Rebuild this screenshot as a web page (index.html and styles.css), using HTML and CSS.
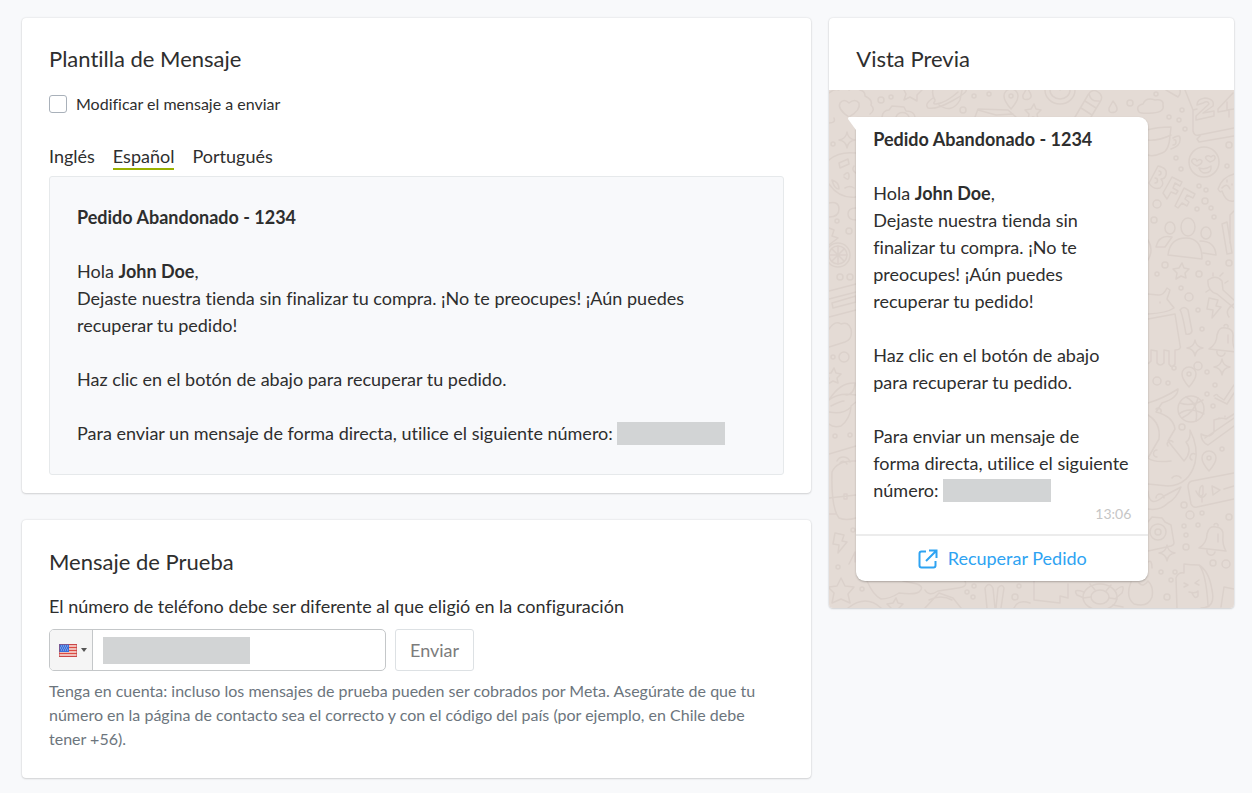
FILE: index.html
```html
<!DOCTYPE html>
<html lang="es">
<head>
  <meta charset="UTF-8">
  <meta name="viewport" content="width=device-width, initial-scale=1.0">
  <title>Plantilla de Mensaje</title>
  <link rel="stylesheet" href="styles.css">
</head>
<body>
  <main class="layout">
    <div class="column">
      <section class="card template">
        <h2>Plantilla de Mensaje</h2>
        <label class="check">
          <input type="checkbox" id="editMessage">
          Modificar el mensaje a enviar
        </label>
        <nav class="tabs">
          <a href="#en">Inglés</a>
          <a href="#es" class="active">Español</a>
          <a href="#pt">Portugués</a>
        </nav>
        <div class="message-box">
          <p><b>Pedido Abandonado - 1234</b></p>
          <p>Hola <b>John Doe</b>,<br>Dejaste nuestra tienda sin finalizar tu compra. ¡No te preocupes! ¡Aún puedes recuperar tu pedido!</p>
          <p>Haz clic en el botón de abajo para recuperar tu pedido.</p>
          <p>Para enviar un mensaje de forma directa, utilice el siguiente número: <span class="redacted"></span></p>
        </div>
      </section>

      <section class="card test">
        <h2>Mensaje de Prueba</h2>
        <label class="phone-label" for="phone">El número de teléfono debe ser diferente al que eligió en la configuración</label>
        <form class="send" autocomplete="off">
          <div class="phone">
            <div class="country">
              <svg class="flag" viewBox="0 0 18 13" width="18" height="13">
                <rect width="18" height="13" fill="#f6e4e2"/>
                <path d="M0 .5h18M0 3.5h18M0 6.5h18M0 9.5h18M0 12.5h18" stroke="#dd4b42" stroke-width="1.4"/>
                <rect width="10" height="8" fill="#3b6fd8"/>
                <path d="M2 2h7M1 4h8M2 6h7" stroke="#a9c6f5" stroke-width="1" stroke-dasharray="1 1"/>
                <rect x=".5" y=".5" width="17" height="12" fill="none" stroke="#b8424e" stroke-opacity=".5"/>
              </svg>
              <svg class="caret" viewBox="0 0 6 4" width="6" height="4"><path d="M0 0h6L3 4z" fill="#555"/></svg>
              <select aria-label="País">
                <option>US</option>
                <option>CL</option>
              </select>
            </div>
            <span class="redacted"></span>
            <input type="tel" id="phone">
          </div>
          <button type="button" class="btn">Enviar</button>
        </form>
        <p class="help">Tenga en cuenta: incluso los mensajes de prueba pueden ser cobrados por Meta. Asegúrate de que tu número en la página de contacto sea el correcto y con el código del país (por ejemplo, en Chile debe tener +56).</p>
      </section>
    </div>

    <aside class="card preview">
      <h2>Vista Previa</h2>
      <div class="chat">
        <svg class="doodles" viewBox="0 0 405 518" preserveAspectRatio="xMinYMin slice" aria-hidden="true">
          <defs>
            <path id="star" d="M0-7l2 5 5 1-4 4 1 5-5-2-5 3 1-6-4-4 6-1z"/>
            <path id="spark" d="M0-8q1 7 8 8q-7 1-8 8q-1-7-8-8q7-1 8-8z"/>
            <path id="pin" d="M0 10q-7-8-7-13a7 7 0 0 1 14 0q0 5-7 13zM-2-3a2 2 0 1 0 4 0a2 2 0 1 0-4 0"/>
            <path id="bolt" d="M-4-9l9 2-2 6 5 1-9 11 1-8-6-1z"/>
            <path id="drop" d="M0-6q7 9 2 11q-7 2-6-4z"/>
            <path id="bell" d="M-13 9q8-5 8-14q2-9 9-7q8 1 7 9q-1 8 3 15zM-5 11a4 4 0 0 0 8 2M2-14a2 2 0 1 1 4 1M6-5v8"/>
          </defs>
          <!-- top strip -->
          <path d="M0 3q6-5 10-3M20 0q5-3 11 0q5 1 5 6q8 4 6 9q5 5-1 9M0 33q7 0 5-5"/>
          <path d="M20 27q-12-8-9-14q4-5 9 0q6-5 10 0q2 7-10 14z"/>
          <path d="M53 27q1-7 7-7l3-4 12 1 2 4q8 0 9 6M67 27a7 7 0 0 1 13 0M74-2l3 6-2 6 6-3 7 4v-6l5-5"/>
          <path d="M104-1a14 14 0 0 0 2 11M110 15q13 9 21-5l2-10M104 8q-9 6-5 10q8 2 24-7t14-11M106 11q-3 3 1 3q10-1 22-12"/>
          <path d="M146 27l3-8 30 1 8 7M149 20l18 5 17-1"/>
          <use href="#pin" x="182" y="9"/><use href="#star" x="205" y="21"/><use href="#drop" x="198" y="4"/>
          <path d="M216 0a15 14 0 0 0 30 0M221 0a10 9 0 0 0 20 0M231 0l3-4"/>
          <path d="M246 27l13-22q4-7 10-3q6 4 2 10l-9 15M256 11l11 7M252 18l11 7M260 4q2 8 10 7"/>
          <use href="#drop" x="284" y="17"/>
          <path d="M310 22q-4-6 4-8q3-7 12-4q9-1 8 5q2 7-10 8t-14-1z"/>
          <path d="M337 0l12 7q3-3 2-7M356 0l8 20M364 20v21q1 5 6 4l35-7M364 20l4-1M371 46l-3 3 2 3 35-6"/>
          <path d="M368 15q0-6 8-7q10 1 8 8l-10 7 11-2v5l-18 4v-4l13-12q-1-4-6-1zM404 3l-15 16v3l11-2v7M398 12v8l7-1"/>
          <!-- right side -->
          <path d="M318 40q10-3 24-3l-1 9q-1 15-8 17-9 4-14 2M318 50q12 1 24-5M344 48q8-5 7 2q0 6-9 9M345 50q2-1 2 2q0 3-3 3"/>
          <circle cx="375" cy="72" r="15"/>
          <path d="M368 76q-8-4-4-7q3-1 4 2q3-3 5 0q0 3-5 5zM381 72q-7-4-3-6q2-1 4 1q3-3 4 0q1 3-5 5zM370 78q7 2 12-2q1 7-6 7-4 0-6-5z"/>
          <path d="M329 76q10 2 8 9q-1 4-5 4q4 5-1 9-7 2-11-5zM330 81a2 2 0 1 1 0 4M326 88a2 2 0 1 1 0 5M334 103l9-16 10 5-2 4-5-3-2 5 5 3-2 3-5-2-4 7zM346 116l9-18 11 6-2 4-6-3-2 4 4 3-2 4-5-3-4 5z"/>
          <path d="M405 84q-12 3-16 15q2 4 4 2q4 12 12 10M393 98q5-6 8 1M398 90v2M403 94v1"/>
          <ellipse cx="359" cy="137" rx="7" ry="9"/><ellipse cx="341" cy="138" rx="5" ry="6"/><ellipse cx="377" cy="143" rx="5" ry="6"/>
          <path d="M339 165q2-17 18-17t16 21zM327 157q3-13 16-10l-7 10zM371 151q15 0 16 14l-13-2"/>
          <path d="M393 134l5-2 5 31-5 1zM405 121l-4 4v28M319 150q6 10 0 20"/>
          <use href="#star" x="353" y="180"/>
          <path d="M319 204l10 1q5 1 9-7l3 2-3 9 7 9q-7 5-26 6M331 212v1M319 229l27-5 5 31q2 5-5 5v14q-3 5-6 0v-13l-5-1 0 13q-4 4-7 0v-12l-6-1v11q-3 4-6 2"/>
          <path d="M351 220q4-5 8 0l4 21q-1 4-6 3-4-22-6-24z"/>
          <path d="M379 190q8-6 14 1l1 9 11 10M379 190q-1 11 9 14l17 14M384 186v-3M391 186l3-3M396 193l3-2M380 200l-3 2M405 214q-10 6-5 13"/>
          <use href="#bolt" x="384" y="217"/><use href="#spark" x="366" y="258"/><use href="#bell" x="393" y="250"/>
          <use href="#spark" x="393" y="277"/><use href="#pin" x="360" y="287"/>
          <path d="M385 306q3-3 4 0l6 4 10-15M386 308l12 6 7-11"/>
          <circle cx="362" cy="319" r="13"/><path d="M351 313q11 4 23-3M357 307q13 7 10 24M369 308q-3 14-16 20M350 324q10-8 25 0"/>
          <path d="M319 313q14-4 30-14q0 9-16 14l-6 9q17 4 19 17l-7 12 16 20q9-10 2-19 5-3 4-12q9 18 5 33-6 22-27 23l-20-2M319 325q13 8 11 24l-11 19q6 5 23 3M327 319a3 3 0 0 1 5 3M339 356a3 3 0 0 1 5-4M328 367a3 3 0 0 1 0-7M343 388a5 4 0 0 1 9 0M363 370a3 3 0 0 1 3-6"/>
          <path d="M372 344q9 5 13-2v-12q7-3 12-1l8-5M372 344q0 8 7 11l26-19M376 348l29-20M390 328v1M396 326v1"/>
          <use href="#pin" x="380" y="371"/>
          <path d="M405 383l-42 8q-4 1-4 6l3 17q2 4 6 3l37-8M371 398q3-5 3 0v6q-2 4-4 0zM367 401q5 11 10 3M373 407v5M383 396l8 4-7 5zM395 399l10-3"/>
          <path d="M319 401q1 18 16 5l17-9q-5 12-13 16-8 8-20 6M327 408a4 4 0 0 1 8 0"/>
          <path d="M319 432l4-5 10 1 3 4 6 3 3 18q0 2-3 3l-23 5"/><circle cx="329" cy="442" r="8"/><circle cx="329" cy="442" r="3"/>
          <use href="#bell" x="383" y="449"/><use href="#spark" x="338" y="463"/>
          <path d="M348 518l-1-30q2-6 8-5v-9q6 1 15 1q10 6 13 25 4 18-11 18M370 475q7 8 9 40M355 493l4 2-4 2M370 490l-4 3 4 2M360 502q7 2 9-1v5q-3 4-6-3M392 517l3-20 10 2"/>
          <!-- left side -->
          <use href="#spark" x="18" y="50"/>
          <path d="M0 70q10-9 27-7M0 94q10 15 27 13M10 73l9-4 1 5-9 4zM3 90q7 2 7 9-5 0-7-9zM15 85q5-5 5 1t-5 1M16 98q5-3 9 0M25 76q-3 4 2 7"/>
          <path d="M0 113q10-2 10 6 0 8-10 8M27 118q-8 0-8 6t8 6M0 138l5 2-2 6 6 2-9 7"/>
          <circle cx="9" cy="165" r="12"/><circle cx="9" cy="165" r="9"/><path d="M9 156v18M0 165h18M3 159l12 12M3 171l12-12"/>
          <path d="M0 201l27-7M0 209l27-7M3 213l24-7v6l-23 6zM0 227l27-7"/>
          <path d="M0 239q6-9 12-5 7-3 10 5 2 10-6 13l-16 5"/>
          <use href="#star" x="5" y="285"/>
          <path d="M0 310q11-18 26-17-1 12-9 12M0 310q9-8 27-5M2 316q10-5 13-5M0 322q14 3 22-5-1 12-10 19-8 2-12-2M22 316l5-4"/>
          <path d="M0 364l27-8M8 371a7 7 0 0 1 13 1M11 373a4 4 0 0 1 7 1M3 382q5-12 24-11M3 382q-1 36 7 46 7 3 17 0M0 408l27-3M0 424h7M15 404h3v5h-3z"/>
          <use href="#bolt" x="10" y="452"/><path d="M20 474l6-12v10"/>
          <!-- bottom strip -->
          <path d="M12 488l4 8 9 1-6 7 2 9-9-4-9 4 2-10-6-6 9-1z"/><use href="#star" x="67" y="515"/>
          <path d="M38 491q6 14 14 18 9 0 18-6 15 2 20-1 6-5-2-8l-14-3M96 500q4 7 13 1l20-3q10-1 7-7M19 518q18-14 33 0M96 518l14-15 14 5 8 10M100 510q12-6 23 0"/>
          <path d="M158 518l-2-20q4-7 8 0l2 20M167 518l2-20q4-5 6 0l-3 20M205 491v19l26 3v-7l8 2v-14M185 518q4-9 16-5"/>
          <ellipse cx="271" cy="507" rx="17" ry="13"/><ellipse cx="271" cy="507" rx="9" ry="7"/><path d="M255 502q-12-4-7 3l7 3M287 500q10-8 6 3l-6 5M284 515l10 2M262 507l-8 1M266 500l-5-6M277 501l5-6M280 508l8 1"/>
          <path d="M302 492q-6 15 3 22 14 4 18-7 2-10-4-16M319 491q-5 7-9 2M319 472q4-3 4 6"/>
          <!-- loose dots -->
          <g>
            <circle cx="52" cy="10" r="3"/><circle cx="62" cy="7" r="2"/><circle cx="134" cy="20" r="3"/><circle cx="145" cy="6" r="2"/><circle cx="160" cy="4" r="2"/><circle cx="301" cy="13" r="3"/><circle cx="327" cy="4" r="2"/>
            <circle cx="340" cy="27" r="2"/><circle cx="350" cy="30" r="2"/><circle cx="353" cy="20" r="2"/><circle cx="356" cy="39" r="2"/><circle cx="400" cy="55" r="3"/><circle cx="347" cy="68" r="2"/><circle cx="352" cy="79" r="2"/><circle cx="398" cy="76" r="2"/>
            <circle cx="370" cy="96" r="2"/><circle cx="377" cy="100" r="2"/><circle cx="376" cy="111" r="3"/><circle cx="328" cy="114" r="4"/><circle cx="382" cy="118" r="2"/><circle cx="368" cy="119" r="2"/><circle cx="385" cy="127" r="2"/><circle cx="325" cy="130" r="3"/>
            <circle cx="336" cy="175" r="3"/><circle cx="328" cy="184" r="2"/><circle cx="370" cy="184" r="3"/><circle cx="379" cy="173" r="2"/><circle cx="400" cy="173" r="3"/><circle cx="352" cy="198" r="2"/><circle cx="360" cy="207" r="4"/><circle cx="369" cy="220" r="2"/>
            <circle cx="373" cy="239" r="2"/><circle cx="369" cy="276" r="4"/><circle cx="345" cy="278" r="2"/><circle cx="328" cy="291" r="4"/><circle cx="339" cy="293" r="2"/><circle cx="378" cy="282" r="2"/><circle cx="386" cy="295" r="2"/><circle cx="378" cy="304" r="2"/>
            <circle cx="384" cy="316" r="2"/><circle cx="353" cy="337" r="3"/><circle cx="393" cy="359" r="2"/><circle cx="355" cy="415" r="3"/><circle cx="361" cy="425" r="4"/><circle cx="373" cy="423" r="2"/><circle cx="369" cy="435" r="2"/><circle cx="355" cy="436" r="2"/>
            <circle cx="357" cy="445" r="2"/><circle cx="357" cy="457" r="3"/><circle cx="400" cy="427" r="3"/><circle cx="384" cy="473" r="3"/><circle cx="397" cy="474" r="4"/><circle cx="332" cy="482" r="2"/><circle cx="346" cy="482" r="2"/><circle cx="342" cy="490" r="2"/><circle cx="338" cy="507" r="3"/>
            <circle cx="4" cy="54" r="2"/><circle cx="8" cy="131" r="2"/><circle cx="20" cy="141" r="3"/><circle cx="11" cy="187" r="3"/><circle cx="21" cy="187" r="3"/><circle cx="15" cy="267" r="5"/><circle cx="4" cy="267" r="2"/><circle cx="6" cy="346" r="2"/><circle cx="21" cy="345" r="2"/>
            <circle cx="24" cy="440" r="2"/><circle cx="9" cy="477" r="2"/><circle cx="33" cy="499" r="2"/><circle cx="138" cy="502" r="2"/><circle cx="145" cy="496" r="2"/><circle cx="144" cy="507" r="2"/><circle cx="186" cy="507" r="3"/><circle cx="190" cy="496" r="2"/>
          </g>
        </svg>
        <article class="bubble">
          <svg class="tail" viewBox="0 0 8 13" width="8" height="13"><path d="M8 0H1Q0 0 0 2l8 11z" fill="#fff"/></svg>
          <div class="bubble-text">
            <p><b>Pedido Abandonado - 1234</b></p>
            <p>Hola <b>John Doe</b>,<br>Dejaste nuestra tienda sin finalizar tu compra. ¡No te preocupes! ¡Aún puedes recuperar tu pedido!</p>
            <p>Haz clic en el botón de abajo para recuperar tu pedido.</p>
            <p>Para enviar un mensaje de forma&nbsp;directa, utilice el siguiente número: <span class="redacted"></span></p>
          </div>
          <time>13:06</time>
          <a href="#recuperar" class="action">
            <svg viewBox="0 0 20 20" width="20" height="20" fill="none" stroke="currentColor" stroke-width="2">
              <path d="M8 2.500H3.500Q1.500 2.500 1.500 4.500V16.500Q1.500 18.500 3.500 18.500H15.500Q17.500 18.500 17.500 16.500V12M11 1.500H18.500V9M18 2L8 12"/>
            </svg>
            Recuperar Pedido
          </a>
        </article>
      </div>
    </aside>
  </main>
</body>
</html>
```
FILE: styles.css
```css
* { box-sizing: border-box; }
body { margin: 0; background: #f8f9fb; color: #2e2e2e; font: 18px/27px Lato, "Open Sans", sans-serif; font-variant-ligatures: none; }
h2 { margin: 0; font-size: 22px; line-height: 28px; font-weight: 400; }
p { margin: 0; }

.layout { display: grid; grid-template-columns: minmax(0, 1.95fr) minmax(0, 1fr); gap: 18px; align-items: start; padding: 18px 18px 14px 22px; }
.column { display: grid; gap: 27px; }
.card { background: #fff; border-radius: 4px; box-shadow: 0 0 2px rgba(0, 0, 0, 0.15), 0 1px 2px rgba(0, 0, 0, 0.12); }
.template { padding: 27px 27px 18px; }
.test { padding: 28px 27px 27px; }

.check { display: flex; align-items: center; gap: 9px; margin-top: 17px; font-size: 16px; line-height: 27px; }
.check input { appearance: none; width: 18px; height: 18px; margin: 0; border: 1px solid #a9b1ba; border-radius: 3px; background: #fff; }
.check input:checked { background: #95ad00; }

.tabs { display: flex; gap: 18px; margin-top: 27px; margin-bottom: 6px; }
.tabs a { color: inherit; text-decoration: none; line-height: 24px; border-bottom: 2px solid transparent; }
.tabs a.active { border-color: #99b000; }

.message-box { padding: 27px; background: #f8f9fb; border: 1px solid #e6e9eb; border-radius: 3px; }
.message-box p + p, .bubble-text p + p { margin-top: 27px; }
.redacted { display: inline-block; width: 108px; height: 23px; background: #d2d4d5; vertical-align: -5px; }

.phone-label { display: block; margin-top: 17px; }
.send { display: flex; gap: 9px; margin-top: 9px; }
.phone { display: flex; align-items: center; width: 337px; height: 42px; border: 1px solid #c4c7c9; border-radius: 5px; overflow: hidden; }
.country { position: relative; display: flex; align-items: center; gap: 4px; width: 43px; height: 100%; padding-left: 9px; background: #f5f5f5; border-right: 1px solid #c4c7c9; }
.country select { position: absolute; inset: 0; width: 100%; opacity: 0; cursor: pointer; }
.phone .redacted { width: 147px; height: 27px; margin-left: 10px; }
.phone input { flex: 1; min-width: 0; height: 100%; padding: 0 9px; border: 0; outline: 0; background: none; font: inherit; }
.btn { padding: 0 14px; background: #fff; border: 1px solid #dde1e4; border-radius: 3px; color: #7c7c7c; font: inherit; }
.help { margin-top: 8px; color: #6c757d; font-size: 16px; line-height: 24px; }

.preview { overflow: hidden; }
.preview h2 { padding: 27px 27px 17px; }
.chat { position: relative; padding: 27px; background: #e4dbd5; }
.doodles { position: absolute; inset: 0; width: 100%; height: 100%; fill: none; stroke: #dbd1cb; stroke-width: 1.5; stroke-linejoin: round; stroke-linecap: round; }
.bubble { position: relative; max-width: 292px; background: #fff; border-radius: 0 9px 9px 9px; box-shadow: 0 1px 2px rgba(0, 0, 0, 0.25); }
.tail { position: absolute; top: 0; left: -8px; }
.bubble-text { padding: 9px 17px 0; }
.bubble time { display: block; padding: 0 17px 10px; color: #c6c6c6; font-size: 14px; line-height: 20px; text-align: right; }
.action { display: flex; align-items: center; justify-content: center; gap: 10px; height: 47px; border-top: 2px solid #ececec; color: #2ea3f2; text-decoration: none; }
```
